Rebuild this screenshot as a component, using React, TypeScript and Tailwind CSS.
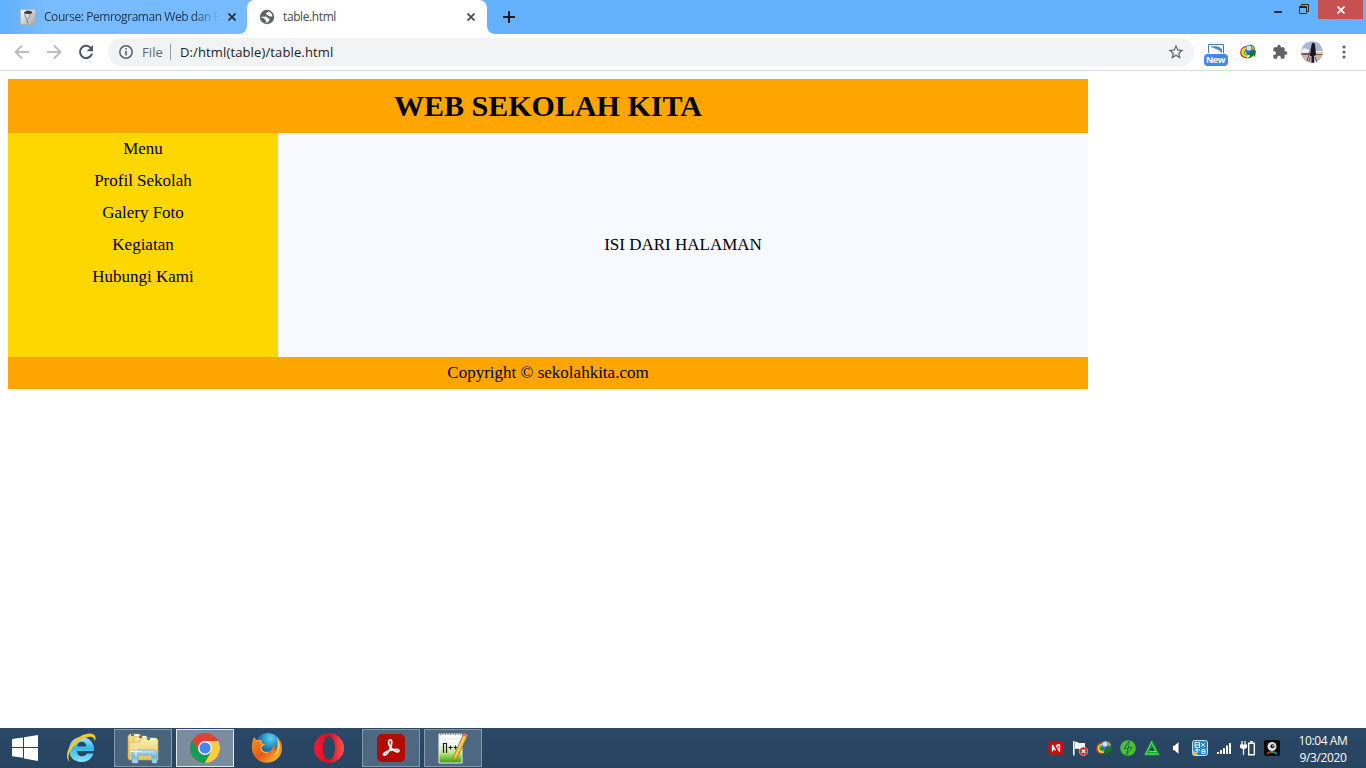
import React from "react";
import { MdExtension, MdStarBorder } from "react-icons/md";

const Svg = ({ w, h, vb, children }: { w: number; h: number; vb?: string; children: React.ReactNode }) => (
  <svg width={w} height={h} viewBox={vb ?? `0 0 ${w} ${h}`} className="block shrink-0" aria-hidden="true">
    {children}
  </svg>
);

const Close = ({ color }: { color: string }) => (
  <Svg w={8} h={8}>
    <path d="M.5.5l7 7M7.5.5l-7 7" stroke={color} strokeWidth="1.7" />
  </Svg>
);

const PageFavicon = () => (
  <Svg w={16} h={16}>
    <defs>
      <linearGradient id="fav" x1="0" y1="0" x2="1" y2="1">
        <stop offset="0" stopColor="#fff" />
        <stop offset="1" stopColor="#a5a5a5" />
      </linearGradient>
    </defs>
    <rect x=".5" y=".5" width="15" height="15" fill="url(#fav)" stroke="#aaa" strokeWidth=".6" />
    <path d="M4 3.500l3-2 4.500.8 1 2-3 .8-5-.4z" fill="#3b3b3b" />
    <path d="M5 5c-.3 2 .5 3.500 2 5l.5 4.500M10 5c.5 2-.5 3-1.800 4.500" stroke="#777" fill="none" strokeWidth=".9" />
  </Svg>
);

const Globe = () => (
  <Svg w={16} h={16}>
    <circle cx="8" cy="8" r="7.200" fill="#5f6368" />
    <path d="M9 2.400c-.9 1.200-2.600.8-2.600 2.400 0 1 1.100.9 2.100 1 .9.100.9 1.200 1.900 1.200 1.300.1 1.900.7 3.100.4A5.600 5.600 0 0 1 9 13.500c.2-1.500 1.600-1.400 1.500-2.800-.1-1-1.300-.8-1.800-1.600-.4-1.200-1.300-1.700-2.500-1.600-1.500.1-2.300.3-3.700-.1A5.600 5.600 0 0 1 4 4.200C5 3 7 2.200 9 2.400z" fill="#5f6368" />
    <path d="M9.300 2.500c-.4 1.200-2.200 1-2.300 2.300 0 1 1 .9 1.700 1.200.7.300.7 1.200 1.700 1.300 1.100.1 1.900.4 3.100.2A5.700 5.700 0 0 0 9.300 2.500z" fill="#fff" />
    <path d="M2.500 7.700c1.700.2 2.700-.2 4-.2 1.300.1 1.500 1 2.200 1.600.7.600 1.800.4 1.800 1.600-.1 1.300-1.200 1.200-1.500 2.700A5.700 5.700 0 0 1 6.500 13.400c.5-.8.900-1.700.1-2.100-1.300-.3-.8-1-1.300-1.700-.6-.6-1.500-.4-2.700-.5z" fill="#fff" />
  </Svg>
);

const Arrow = ({ right = false }: { right?: boolean }) => (
  <Svg w={16} h={16}>
    <path d={right ? "M1 8h13M8 1.500L14.500 8 8 14.500" : "M15 8H2M8 1.500L1.500 8 8 14.500"} fill="none" stroke="#babcbe" strokeWidth="1.900" />
  </Svg>
);

const Reload = () => (
  <Svg w={16} h={16}>
    <path d="M13 4.200A6.100 6.100 0 1 0 14 9.600" fill="none" stroke="#54575b" strokeWidth="2" />
    <path d="M15 1v6.300H8.700z" fill="#54575b" />
  </Svg>
);

const FirefoxIcon = () => (
  <Svg w={32} h={32}>
    <defs>
      <radialGradient id="ffb" cx=".6" cy=".2" r=".8">
        <stop offset="0" stopColor="#64d1f2" />
        <stop offset=".5" stopColor="#1779b9" />
        <stop offset="1" stopColor="#123d79" />
      </radialGradient>
      <linearGradient id="ffo" x1="0" y1="0" x2="1" y2="1">
        <stop offset="0" stopColor="#f7941e" />
        <stop offset=".5" stopColor="#e55a18" />
        <stop offset="1" stopColor="#ffd43c" />
      </linearGradient>
    </defs>
    <circle cx="17" cy="14.500" r="13.500" fill="url(#ffb)" />
    <path d="M3 5l3.500 4c2-1 3-.5 4-.3-1 1.500.5 3.200 3 3.400-.2 1.500-1.700 1.700-2.700 2.600-.8 5 6 7 9.200 3.500 2-2 2.500-4 2.200-6 2.500 2 2.300 5.500 1 7.500 2.500-2.500 3.500-6 2.800-9.500l1.500 1 .6-3.700C30.500 10 31 13 31 16A15 14.500 0 0 1 1 16.500C.7 12 1.500 8 3 5z" fill="url(#ffo)" />
    <path d="M26 5c3 4 4 9 1.500 15-1 2.200-2.500 4-5 5.500 4.500-6 5-13 3.500-20.500z" fill="#ffd042" />
    <path d="M5 9c3-1 5 0 5.500.5-1.500 1-.3 2.800 2.300 3l-3 2.500c-.5 4.500 4.200 6.500 7.200 5" fill="none" stroke="#ffb03c" strokeWidth="1.200" />
  </Svg>
);

const ExplorerIcon = () => (
  <Svg w={34} h={32}>
    <defs>
      <linearGradient id="fold" x1="0" y1="0" x2="0" y2="1">
        <stop offset="0" stopColor="#fff0a9" />
        <stop offset="1" stopColor="#e5c364" />
      </linearGradient>
      <linearGradient id="stand" x1="0" y1="0" x2="0" y2="1">
        <stop offset="0" stopColor="#c4eafa" />
        <stop offset=".5" stopColor="#6fb7db" />
        <stop offset="1" stopColor="#b4e2f4" />
      </linearGradient>
    </defs>
    <path d="M2 4l2-2h9l2 2v23H2z" fill="#f3da83" stroke="#c6a44c" strokeWidth=".6" />
    <path d="M8 6l2-2h10l2 2v21H8z" fill="#f9e69c" stroke="#c6a44c" strokeWidth=".6" />
    <path d="M14 8l2-2h14l2 2v20H3V10h11z" fill="url(#fold)" stroke="#c6a44c" strokeWidth=".6" />
    <path d="M5 2h3v2H5z" fill="#1cb11c" /><path d="M8 2h5v2H8z" fill="#fff" />
    <path d="M13 4h3v2h-3z" fill="#e34228" /><path d="M16 4h4v2h-4z" fill="#fff" />
    <path d="M21 6h3v2h-3z" fill="#148de9" /><path d="M24 6h6v2h-6z" fill="#fff" />
    <path d="M6 31V20l3-2h19l3 2v11h-5v-8H12v8z" fill="url(#stand)" stroke="#6da4bd" strokeWidth=".7" />
    <path d="M10 14v11M4.500 19.500h11" stroke="#fff" strokeWidth=".9" />
  </Svg>
);

const InternetIcon = () => (
  <Svg w={32} h={32}>
    <defs>
      <linearGradient id="ie" x1="0" y1="0" x2="0" y2="1">
        <stop offset="0" stopColor="#9deaff" />
        <stop offset=".45" stopColor="#33b9ed" />
        <stop offset="1" stopColor="#89e5fd" />
      </linearGradient>
    </defs>
    <path fillRule="evenodd" d="M16.500 5C23.500 5 29 10 29 17v2H12c.3 3.500 2 5.200 5 5.200 2.200 0 4-.8 5-2.700h6.500C26.500 27 22.500 30 16.500 30 9 30 4 25 4 17.500S9.500 5 16.500 5zM12 14.500h9.500c-.3-3-2-4.700-4.700-4.700-2.600 0-4.300 1.700-4.800 4.700z" fill="url(#ie)" />
    <path d="M4.500 30C-.5 26 2 15 10.500 7.500 17.500 1.500 26 0 29.300 3c1.700 1.600 1.500 4 .5 6.500-.2-3.500-2.500-5.500-6.500-4.500C16 6 8 13.500 5 19.500c-1.700 3-2 7.500-.5 10.500z" fill="#fcc52c" />
  </Svg>
);

const ChromeIcon = () => (
  <Svg w={32} h={32}>
    <circle cx="16" cy="16" r="15" fill="#db4437" />
    <path d="M16 9h13.300A15 15 0 0 1 15.500 31L22.060 19.500z" fill="#ffcd40" />
    <path d="M3.010 8.500A15 15 0 0 0 15.500 31L22.060 19.500H16L9.940 19.500z" fill="#0f9d58" />
    <circle cx="16" cy="16" r="7" fill="#f1f1f1" />
    <circle cx="16" cy="16" r="5.500" fill="#4285f4" />
  </Svg>
);

const OperaIcon = () => (
  <Svg w={32} h={32}>
    <defs>
      <linearGradient id="op" x1="0" y1="0" x2="1" y2="0">
        <stop offset="0" stopColor="#fa1734" />
        <stop offset=".5" stopColor="#cf1023" />
        <stop offset="1" stopColor="#ff5454" />
      </linearGradient>
    </defs>
    <path fillRule="evenodd" d="M16 1a15 15 0 1 0 0 30 15 15 0 0 0 0-30zM16 4.500c3.700 0 6 5 6 11.500s-2.300 11.500-6 11.500S10 22.500 10 16s2.300-11.500 6-11.500z" fill="url(#op)" />
  </Svg>
);

const AcrobatIcon = () => (
  <Svg w={30} h={30}>
    <rect x="1" y="1" width="28" height="28" rx="5" fill="#b30b00" />
    <path d="M14 7c2.500-.7 2 4 .5 7.500-1.200 3-4 7.500-6 7.700-1.800 0-1.200-2 1.500-3.300 3.500-1.800 9.500-3 12-2.300 2 .8.500 2.700-1.600 2-3-1-7-4.300-7.700-8.100-.2-1.200 0-3 .8-3.500z" fill="none" stroke="#fff" strokeWidth="1.700" />
  </Svg>
);

const NotepadIcon = () => (
  <Svg w={32} h={34}>
    <defs>
      <linearGradient id="np" x1="0" y1="0" x2="0" y2="1">
        <stop offset=".35" stopColor="#fff" />
        <stop offset=".65" stopColor="#bce979" />
        <stop offset="1" stopColor="#349d10" />
      </linearGradient>
    </defs>
    <path d="M2 3h23v29H2z" fill="url(#np)" stroke="#e9eeec" />
    <path d="M3 3h22" stroke="#888" strokeWidth="2" strokeDasharray="1 1.500" />
    <path d="M3 8h20M3 12h20M3 16h20M3 20h20" stroke="#c9d9cf" strokeWidth=".6" />
    <path d="M6.500 22v-9.500h3V22M11.500 16.500h4M13.500 14.500v4M16.500 16.500h4M18.500 14.500v4" fill="none" stroke="#222" strokeWidth="1.200" />
    <path d="M26 4l4 2-10 21-4 3 .8-5z" fill="#f6b832" stroke="#a36a16" strokeWidth=".7" />
    <path d="M26 4l1-2 4 2-1 2z" fill="#e57366" />
    <path d="M28 5L18 26" stroke="#ffe488" />
  </Svg>
);

const tasks = [
  { name: "Internet", icon: <InternetIcon />, style: "border-transparent" },
  { name: "Explorer", icon: <ExplorerIcon />, style: "border-[#8598ac] bg-[#4b647e]" },
  { name: "Chrome", icon: <ChromeIcon />, style: "border-[#e4e9ed] bg-[#7b8c9e]" },
  { name: "Firefox", icon: <FirefoxIcon />, style: "border-transparent" },
  { name: "Opera", icon: <OperaIcon />, style: "border-transparent" },
  { name: "Acrobat", icon: <AcrobatIcon />, style: "border-[#8598ac] bg-[#4f6881]" },
  { name: "Notepad", icon: <NotepadIcon />, style: "border-[#8598ac] bg-[#4f6881]" },
];

const SmallSphere = () => (
  <>
    <circle cx="10" cy="5.700" r="5.200" fill="#3a6fb5" />
    <circle cx="9" cy="4" r="2.600" fill="#cfe2f3" />
    <path d="M12 1.500c2 1 3 3 2.500 5l-3-1.500z" fill="#c4a238" />
    <path d="M6 2.500C2.500 3.500.5 6.500 1 9.500c.5 2.500 3 4 6 4" fill="none" stroke="#c33a22" strokeWidth="1.500" />
    <path d="M6 4C3.500 5 2 7 2.500 9.200 3 11.300 5 12.300 8 12" fill="none" stroke="#f4df27" strokeWidth="1.700" />
    <path d="M6 5.800c-2 1.200-2.400 3-1.300 4.200 1 1 2.500 1 4 .5" fill="none" stroke="#57b53a" strokeWidth="1.500" />
    <path d="M7 9.500c2 .5 3-.2 4-1L9.500 7 16 6.500l-1 6.500-1.500-1.700C12 13 10 14.700 6.500 14.500c2-.7 3-1.800 3.500-3z" fill="#127a16" />
  </>
);

const tray = [
  <Svg w={16} h={16}><path d="M.500 1.500h15v13H.500z" fill="#d00b0b" /><path d="M4.500 11.500V5l3 5.500M8 5l3.500 6.500V5H9M4.500 9h2" fill="none" stroke="#fff" strokeWidth="1.300" /></Svg>,
  <Svg w={16} h={16}><path d="M1.800 1v14.500" stroke="#fff" strokeWidth="1.600" /><path d="M3 2c3-1 3 2 6 1h4v6H9c-2 1-3-1-6 0z" fill="#fff" /><circle cx="11.500" cy="11.300" r="4.300" fill="#d6291b" stroke="#f7d5d0" strokeWidth=".6" /><path d="M9.800 9.600l3.400 3.400m0-3.400l-3.400 3.400" stroke="#fff" strokeWidth="1.300" /></Svg>,
  <Svg w={16} h={16}><SmallSphere /></Svg>,
  <Svg w={16} h={16}><circle cx="8" cy="8" r="7.800" fill="#43c62b" /><path d="M9.500 0L3.500 9H7.200L6 16 12.500 7H8.800z" fill="#29465f" /><path d="M9 2.500L5 8.200H8.500L7.300 13.500l3.900-5.700H7.800z" fill="#43c62b" /></Svg>,
  <Svg w={16} h={16}><path d="M8 0L16 15.500H0z" fill="#16a52c" /><path d="M8 6.300l2.800 5.200H5.200z" fill="#294060" /><path d="M8 1L1.500 14h13M5.200 11.500h7L8 3.500" fill="none" stroke="#5dea5f" strokeWidth="1" /></Svg>,
  <Svg w={16} h={16}><path d="M4.500 5.200h2L11 1v14L6.500 10.800h-2z" fill="#fff" stroke="#172c42" strokeWidth=".8" /></Svg>,
  <Svg w={16} h={16}><rect x=".5" y=".5" width="15" height="15" rx="2" fill="#2687d0" stroke="#b9e2f3" /><path d="M3 2.500h4.500v5H3zm0 2.500h4.500M9 3l4 4m0-4L9 7M3 10h5m-3-1.500V13H3M10 9.500h3v4h-3zM10 11.500h3" fill="none" stroke="#e5f7ff" strokeWidth="1" /><path d="M1 10l5 5H1z" fill="#f6b73b" /></Svg>,
  <Svg w={16} h={16}><path d="M1 12h2v2H1zM4 10h2v4H4zM7 8h2v6H7zM10 5.500h2V14h-2zM13 3h2v11h-2z" fill="#fff" /></Svg>,
  <Svg w={16} h={16}><path d="M2 1v4M5 1v4M.5 5h6v2l-1.700 1.500H2.200L.5 7z" fill="#fff" stroke="#fff" strokeWidth="1.200" /><path d="M3.500 8v7" stroke="#fff" strokeWidth="1.300" /><path d="M8.700 3.200h5.600v11.600H8.700z" fill="#29465f" stroke="#fff" strokeWidth="1.400" /><path d="M10 1.700h3" stroke="#fff" strokeWidth="1.500" /></Svg>,
  <Svg w={16} h={16}><rect width="16" height="16" rx="2" fill="#050505" /><circle cx="8" cy="6.500" r="4.500" fill="#dce0e0" /><circle cx="8.500" cy="6.300" r="2" fill="#111" /><circle cx="9" cy="6" r=".8" fill="#fff" /><path d="M3 14q1.500-2 3.500-2.300" stroke="#db3629" strokeWidth="1.500" fill="none" /><path d="M6.500 12h3" stroke="#53c832" strokeWidth="1.500" /><path d="M9.500 12q2 .3 3.500 2" stroke="#338ce6" strokeWidth="1.500" fill="none" /></Svg>,
];

function BrowserTabs() {
  return (
    <header className="flex h-[34px] bg-[#64b1fd] pl-2">
      <div className="flex w-[239px] bg-[linear-gradient(to_bottom,#64b1fd_50%,white_50%)]">
        <div className="flex h-[34px] w-[239px] items-center rounded-tl-lg rounded-br-lg bg-gradient-to-r from-[#66b2fd] via-[#79bcff] via-15% to-[#76bbff] pl-3 pr-[11px] text-[#20364b]">
          <PageFavicon />
          <span className="ml-2 w-[180px] whitespace-nowrap text-[12px] tracking-[-0.45px] [mask-image:linear-gradient(to_right,black_150px,transparent_175px)]">Course: Pemrograman Web dan P</span>
          <span className="ml-auto"><Close color="#222b33" /></span>
        </div>
      </div>
      <div className="flex bg-gradient-to-r from-[#76bbff] to-[#64b1fd]">
        <div className="flex w-[240px] items-center rounded-t-lg bg-white pl-3 pr-3">
          <Globe />
          <span className="ml-2 text-[12px] tracking-[-0.4px] text-[#45484c]">table.html</span>
          <span className="ml-auto"><Close color="#45494d" /></span>
        </div>
      </div>
      <div className="flex bg-white">
        <div className="flex w-11 items-center rounded-bl-lg bg-[#64b1fd] pl-4">
          <Svg w={12} h={12}><path d="M6 0v12M0 6h12" stroke="#171d24" strokeWidth="2" /></Svg>
        </div>
      </div>
      <div className="ml-auto flex items-start">
        <div className="mr-[17px] mt-[11px] h-[2px] w-2 bg-[#272b2f]" />
        <div className="mr-[9px] mt-1"><Svg w={10} h={10}><path d="M.5 2.500h7v7h-7zM2.500 2.500V.5h7v7h-2M.5 3.500h7" fill="none" stroke="#222" /></Svg></div>
        <div className="mr-[3px] flex h-[19px] w-[45px] items-center justify-center bg-[#c75050]"><Svg w={8} h={8}><path d="M.5.5l7 7m0-7l-7 7" stroke="#fff" strokeWidth="1.700" /></Svg></div>
      </div>
    </header>
  );
}

function Toolbar() {
  return (
    <div className="flex h-[37px] items-center border-b border-[#dadce0] bg-white px-[14px]">
      <div className="flex w-[94px] gap-4"><Arrow /><Arrow right /><Reload /></div>
      <div className="flex h-7 w-[1086px] items-center rounded-full bg-[#f1f3f4] pl-[11px] pr-[9px] text-[13px]">
        <Svg w={14} h={14}><circle cx="7" cy="7" r="6.200" fill="none" stroke="#5f6368" strokeWidth="1.500" /><path d="M7 6v4.500M7 3v1.600" stroke="#5f6368" strokeWidth="1.600" /></Svg>
        <span className="ml-[9px] w-7 pt-px tracking-[0.1px] text-[#63676b]">File</span>
        <div className="mr-[9px] h-4 w-px bg-[#9b9ea1]" />
        <span className="whitespace-nowrap pt-[2px] tracking-[0.13px] text-[#222427]">D:/html(table)/table.html</span>
        <MdStarBorder className="ml-auto size-[18px] text-[#5f6368]" />
      </div>
      <div className="ml-[10px] mt-[6px] flex h-[22px] w-6 flex-col items-center">
        <Svg w={16} h={10}><path d="M.5 9V.5h15V9" fill="none" stroke="#477fa8" /><path d="M2 3c5-2 9-1 12 2v4C10 5 6 4 2 3z" fill="#4f91b9" /></Svg>
        <div className="flex h-3 w-6 items-center justify-center rounded-sm bg-[#4285f4] text-[9px] font-bold tracking-[-0.4px] text-white"><span className="-ml-px">New</span></div>
      </div>
      <div className="ml-3"><Svg w={16} h={16}><SmallSphere /></Svg></div>
      <MdExtension className="ml-4 size-4 text-[#5f6368]" />
      <div className="ml-[13px]">
        <Svg w={22} h={22}><defs><clipPath id="profile"><circle cx="11" cy="11" r="10.800" /></clipPath></defs><g clipPath="url(#profile)"><path fill="#a9b6d6" d="M0 0h22v11H0z" /><path fill="#7b5a55" d="M0 11h22v4H0z" /><path fill="#c6b5b8" d="M0 14h22v8H0z" /><path fill="#f4f1ed" d="M0 9q4-4 9 1h13v2H0z" /><path fill="#e8c9a5" d="M14 11h8v2h-8z" /><path d="M11 2h2.500l.8 4 .7 8-2 1v7h-2.500v-7H9l.7-7z" fill="#171722" /><path d="M9 10l-3 10M9 16l-1 5M14 16l2 5" stroke="#66555e" /></g></Svg>
      </div>
      <div className="ml-[19px]"><Svg w={4} h={14}><circle cx="2" cy="2" r="1.600" fill="#5f6368" /><circle cx="2" cy="7" r="1.600" fill="#5f6368" /><circle cx="2" cy="12" r="1.600" fill="#5f6368" /></Svg></div>
    </div>
  );
}

export default function App() {
  return (
    <div className="flex h-screen w-full flex-col overflow-hidden bg-white font-['Open_Sans',sans-serif]">
      <BrowserTabs />
      <Toolbar />
      <main className="flex-1 p-2 font-['Liberation_Serif',serif] text-[17px] text-black">
        <div className="w-[1080px]">
          <h1 className="flex h-[54px] items-center justify-center bg-[#ffa500] pb-[2px] text-[30px] font-bold">WEB SEKOLAH KITA</h1>
          <div className="flex h-56">
            <nav className="w-[270px] bg-[#ffd700] text-center leading-8">
              {["Menu", "Profil Sekolah", "Galery Foto", "Kegiatan", "Hubungi Kami"].map((item) => <div key={item}>{item}</div>)}
            </nav>
            <section className="flex flex-1 items-center justify-center bg-[#f8f8ff]">ISI DARI HALAMAN</section>
          </div>
          <footer className="flex h-8 items-center justify-center bg-[#ffa500]">Copyright © sekolahkita.com</footer>
        </div>
      </main>
      <footer className="flex h-10 items-center bg-gradient-to-b from-[#294867] to-[#27445f]">
        <div className="flex w-[50px] justify-center"><Svg w={26} h={26}><path d="M0 4l11-1.500V12H0zM12 2.300L26 0v12H12zM0 13h11v9.800L0 21.200zM12 13h14v13l-14-2.400z" fill="#fff" /></Svg></div>
        {tasks.map(({ name, icon, style }) => (
          <div key={name} className="flex w-[62px] justify-center"><div className={`flex h-[38px] w-[58px] items-center justify-center border ${style}`}>{icon}</div></div>
        ))}
        <div className="ml-auto flex gap-2">{tray.map((icon, index) => <React.Fragment key={index}>{icon}</React.Fragment>)}</div>
        <div className="ml-[13px] mr-[13px] w-[60px] whitespace-nowrap pt-[2px] text-center text-[12px] leading-[17px] tracking-[-0.4px] text-white"><div>10:04 AM</div><div>9/3/2020</div></div>
      </footer>
    </div>
  );
}
